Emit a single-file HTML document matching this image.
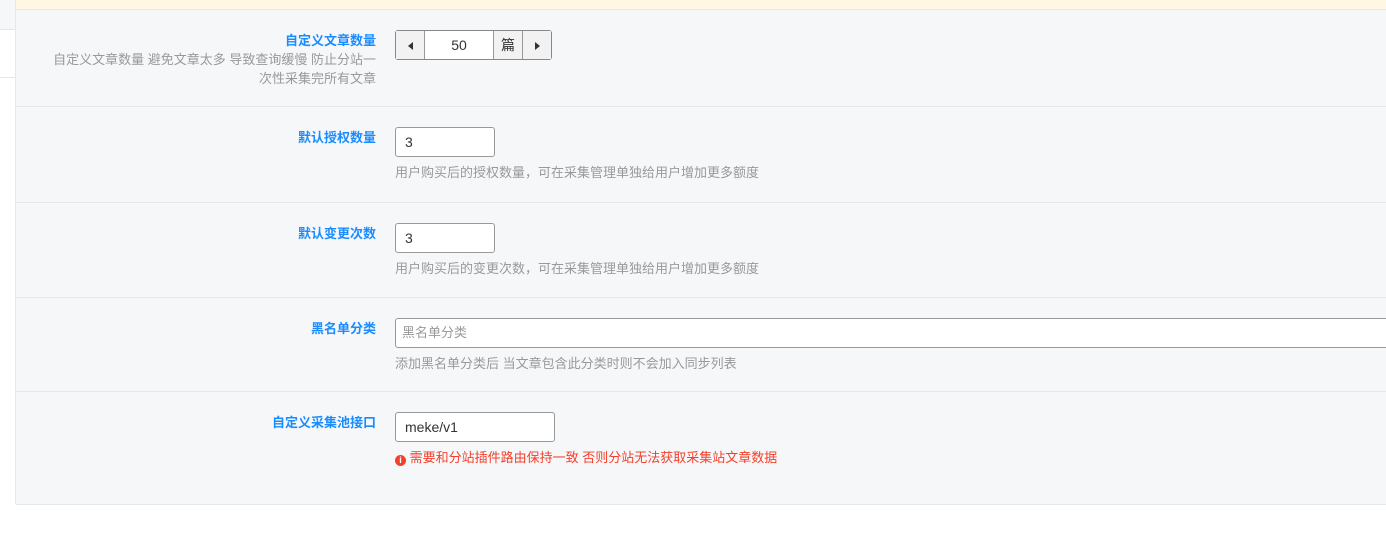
<!DOCTYPE html>
<html><head><meta charset="utf-8"><style>
body{margin:0;width:1386px;height:544px;background:#fff;font-family:"Liberation Sans","Noto Sans CJK SC",sans-serif;position:relative;overflow:hidden}
.left{position:absolute;left:0;top:0;width:15px;height:29px;background:#f6f7f9;border-right:1px solid #e8e8e8}
.leftline{position:absolute;left:15px;top:0;width:1px;height:504px;background:#e8e8e8}
.leftbox{position:absolute;left:0;top:29px;width:15px;height:47px;background:#fff;border-top:1px solid #e6e6e6;border-bottom:1px solid #e6e6e6}
.main{position:absolute;left:16px;top:0;width:1370px;height:504px;background:#f6f7f9;border-bottom:1px solid #e8e8e8}
.yellow{position:absolute;left:0;top:0;width:1370px;height:9px;background:#fdf7e3;border-bottom:1px solid #efe9d8}
.row{position:absolute;left:0;width:1370px;border-bottom:1px solid #e6e7ea}
.lab{position:absolute;right:1010px;text-align:right;color:#1a8cff;font-weight:bold;font-size:13px;width:360px}
.desc{color:#999;font-size:13px;font-weight:normal;line-height:19px;margin-top:1px}
.ctl{position:absolute;left:379px}
.inp{box-sizing:border-box;height:30px;border:1px solid #999;border-radius:3px;background:#fff;font-size:14px;color:#333;padding:0 9px;line-height:28px}
.help{font-size:13px;color:#999;margin-top:5px}
.tri{width:0;height:0;display:inline-block;border-top:4px solid transparent;border-bottom:4px solid transparent}
</style></head><body>
<div class="left"></div><div class="leftbox"></div><div class="leftline"></div>
<div class="main">
<div class="yellow"></div>
<div class="row" style="top:10px;height:96px">
 <div class="lab" style="top:20px">自定义文章数量<div class="desc">自定义文章数量 避免文章太多 导致查询缓慢 防止分站一<br>次性采集完所有文章</div></div>
 <div class="ctl" style="top:20px;display:flex;border:1px solid #888;border-radius:3px;height:28px;background:#fff;font-size:14px;color:#333;line-height:28px">
  <div style="width:28px;text-align:center;background:#f2f2f2;border-right:1px solid #999"><span class="tri" style="border-right:5px solid #333"></span></div>
  <div style="width:68px;text-align:center">50</div>
  <div style="width:28px;text-align:center;background:#f2f2f2;border-left:1px solid #999;border-right:1px solid #999">篇</div>
  <div style="width:28px;text-align:center;background:#f2f2f2"><span class="tri" style="border-left:5px solid #333"></span></div>
 </div>
</div>
<div class="row" style="top:107px;height:95px">
 <div class="lab" style="top:20px">默认授权数量</div>
 <div class="ctl" style="top:20px"><div class="inp" style="width:100px">3</div><div class="help">用户购买后的授权数量，可在采集管理单独给用户增加更多额度</div></div>
</div>
<div class="row" style="top:203px;height:94px">
 <div class="lab" style="top:20px">默认变更次数</div>
 <div class="ctl" style="top:20px"><div class="inp" style="width:100px">3</div><div class="help">用户购买后的变更次数，可在采集管理单独给用户增加更多额度</div></div>
</div>
<div class="row" style="top:298px;height:93px">
 <div class="lab" style="top:20px">黑名单分类</div>
 <div class="ctl" style="top:20px"><div class="inp" style="width:1000px;color:#999;padding-left:6px;font-size:13px">黑名单分类</div><div class="help">添加黑名单分类后 当文章包含此分类时则不会加入同步列表</div></div>
</div>
<div class="row" style="top:392px;height:112px;border:none">
 <div class="lab" style="top:20px">自定义采集池接口</div>
 <div class="ctl" style="top:20px"><div class="inp" style="width:160px">meke/v1</div><div class="help" style="color:#f4402b"><span style="display:inline-block;width:11px;height:11px;border-radius:50%;background:#f4402b;color:#fff;font-size:9px;line-height:11px;text-align:center;font-weight:bold;vertical-align:-1px">i</span> 需要和分站插件路由保持一致 否则分站无法获取采集站文章数据</div></div>
</div>
</div>
</body></html>
